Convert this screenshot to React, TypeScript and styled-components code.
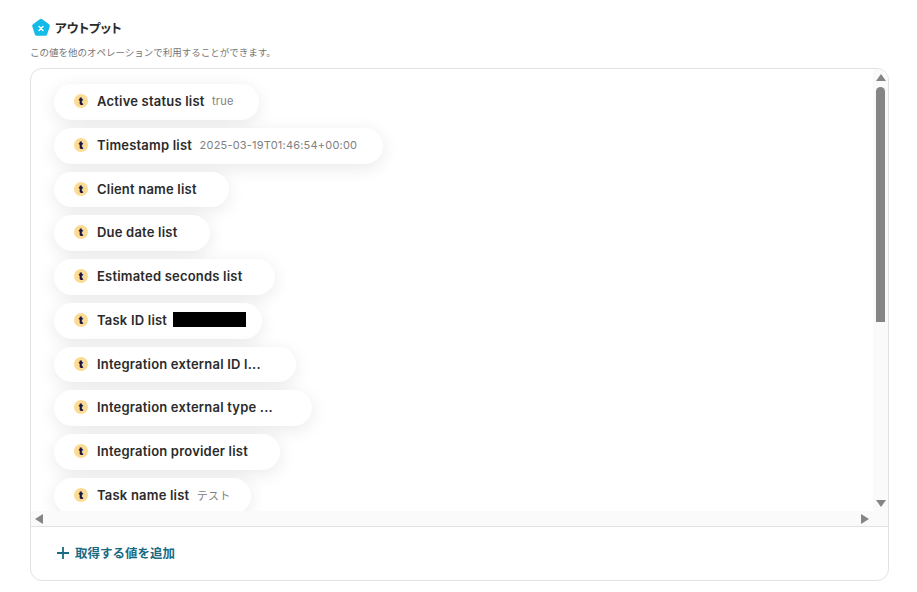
import styled, { createGlobalStyle } from "styled-components";

type OutputItem = {
  name: string;
  value?: string;
  width: number;
  masked?: boolean;
};

const items: OutputItem[] = [
  { name: "Active status list", value: "true", width: 205 },
  { name: "Timestamp list", value: "2025-03-19T01:46:54+00:00", width: 329 },
  { name: "Client name list", width: 175 },
  { name: "Due date list", width: 156 },
  { name: "Estimated seconds list", width: 221 },
  { name: "Task ID list", masked: true, width: 208 },
  { name: "Integration external ID l...", width: 242 },
  { name: "Integration external type ...", width: 258 },
  { name: "Integration provider list", width: 226 },
  { name: "Task name list", value: "テスト", width: 197 },
];

const GlobalStyle = createGlobalStyle`
  html, body {
    margin: 0;
    padding: 0;
    background: #fff;
  }
  body {
    font-family: Inter, "Noto Sans CJK JP", "Noto Sans", sans-serif;
    color: #2b2b2b;
  }
`;

const Page = styled.div`
  width: 917px;
  height: 592px;
  box-sizing: border-box;
  padding: 17px 28px 11px 30px;
  display: flex;
  flex-direction: column;
  overflow: hidden;
`;

const Heading = styled.div`
  display: flex;
  align-items: center;
  gap: 4px;
  padding-left: 1px;
  height: 21px;
`;

const Title = styled.h2`
  margin: 0;
  font-size: 12.5px;
  font-weight: 700;
  font-feature-settings: "palt";
  color: #2b2b2b;
`;

const Description = styled.p`
  margin: 8px 0 8px;
  font-size: 9.5px;
  line-height: 14px;
  color: #777;
`;

const Panel = styled.section`
  flex: 1;
  min-height: 0;
  border: 1px solid #e2e2e2;
  border-radius: 12px;
  display: flex;
  flex-direction: column;
  overflow: hidden;
`;

const ScrollArea = styled.div`
  height: 457px;
  display: grid;
  grid-template-columns: 1fr 15px;
  grid-template-rows: 1fr 15px;
  border-bottom: 1px solid #e2e2e2;
`;

const List = styled.ul`
  list-style: none;
  margin: 0;
  padding: 15px 0 0 23px;
  display: flex;
  flex-direction: column;
  gap: 8px;
  overflow: hidden;
`;

const Pill = styled.li<{ $width: number }>`
  flex: none;
  width: ${(props) => props.$width}px;
  height: 35.75px;
  box-sizing: border-box;
  padding: 0 0 1.5px 20px;
  display: flex;
  align-items: center;
  border-radius: 18px;
  background: #fff;
  box-shadow: 0 4px 18px rgba(0, 0, 0, 0.09);
`;

const Badge = styled.span`
  flex: none;
  width: 14px;
  height: 14px;
  border-radius: 50%;
  background: #fcdc94;
  color: #22123d;
  font-size: 11px;
  font-weight: 900;
  line-height: 14px;
  text-align: center;
`;

const Name = styled.span`
  margin-left: 9px;
  font-size: 13px;
  font-weight: 600;
  letter-spacing: 0.2px;
  color: #2b2b2b;
  white-space: nowrap;
`;

const Value = styled.span`
  margin-left: 7.5px;
  font-size: 11px;
  letter-spacing: 0.2px;
  color: #808080;
  white-space: nowrap;
`;

const Mask = styled.span`
  margin-left: 6px;
  width: 73px;
  height: 15px;
  background: #000;
`;

const VerticalTrack = styled.div`
  background: #fafafa;
  display: flex;
  flex-direction: column;
  align-items: center;
  padding: 5px 0 4px;
  box-sizing: border-box;
`;

const Thumb = styled.div`
  width: 9px;
  height: 235px;
  margin-top: 6px;
  margin-bottom: auto;
  border-radius: 5px 5px 0 0;
  background: #858585;
`;

const HorizontalTrack = styled.div`
  background: #fafafa;
  display: flex;
  align-items: center;
  justify-content: space-between;
  padding: 0 4px;
`;

const Corner = styled.div`
  background: #fafafa;
`;

const Arrow = styled.span<{ $dir: "up" | "down" | "left" | "right" }>`
  flex: none;
  width: 0;
  height: 0;
  border-style: solid;
  border-color: transparent;
  ${(props) =>
    props.$dir === "up" && "border-width: 0 5px 7px; border-bottom-color: #858585;"}
  ${(props) =>
    props.$dir === "down" && "border-width: 7px 5px 0; border-top-color: #858585;"}
  ${(props) =>
    props.$dir === "left" && "border-width: 5px 8px 5px 0; border-right-color: #858585;"}
  ${(props) =>
    props.$dir === "right" && "border-width: 5px 0 5px 8px; border-left-color: #858585;"}
`;

const Footer = styled.div`
  flex: 1;
  display: flex;
  align-items: center;
  padding: 0 0 2px 25px;
`;

const AddButton = styled.button`
  border: 0;
  padding: 0;
  background: none;
  display: flex;
  align-items: center;
  gap: 5px;
  font-family: inherit;
  font-size: 12.5px;
  font-weight: 700;
  color: #1a6a82;
  cursor: pointer;
`;

const LogoIcon = () => (
  <svg width="20" height="20" viewBox="0 0 20 20" aria-hidden="true">
    <path
      d="M8.8 1.3a2 2 0 0 1 2.4 0l6.8 4.9a2 2 0 0 1 .7 2.2l-2.6 8a2 2 0 0 1-1.9 1.4H5.8a2 2 0 0 1-1.9-1.4l-2.6-8a2 2 0 0 1 .7-2.2z"
      fill="#12bbe8"
    />
    <path d="M8 8.5l4 4M12 8.5l-4 4" stroke="#fff" strokeWidth="1.4" strokeLinecap="round" />
  </svg>
);

const PlusIcon = () => (
  <svg width="14" height="14" viewBox="0 0 14 14" aria-hidden="true">
    <path d="M7 1v12M1 7h12" stroke="#1a6a82" strokeWidth="1.8" />
  </svg>
);

export default function App() {
  return (
    <Page>
      <GlobalStyle />
      <Heading>
        <LogoIcon />
        <Title>アウトプット</Title>
      </Heading>
      <Description>この値を他のオペレーションで利用することができます。</Description>
      <Panel>
        <ScrollArea>
          <List>
            {items.map((item) => (
              <Pill key={item.name} $width={item.width}>
                <Badge>t</Badge>
                <Name>{item.name}</Name>
                {item.value && <Value>{item.value}</Value>}
                {item.masked && <Mask />}
              </Pill>
            ))}
          </List>
          <VerticalTrack>
            <Arrow $dir="up" />
            <Thumb />
            <Arrow $dir="down" />
          </VerticalTrack>
          <HorizontalTrack>
            <Arrow $dir="left" />
            <Arrow $dir="right" />
          </HorizontalTrack>
          <Corner />
        </ScrollArea>
        <Footer>
          <AddButton type="button">
            <PlusIcon />
            取得する値を追加
          </AddButton>
        </Footer>
      </Panel>
    </Page>
  );
}
